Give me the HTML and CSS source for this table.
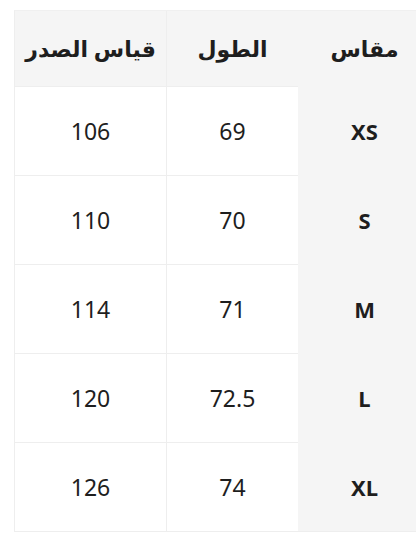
FILE: index.html
```html
<!DOCTYPE html>
<html lang="ar">
<head>
<meta charset="utf-8">
<link rel="stylesheet" href="styles.css">
</head>
<body>
<div class="page">
  <div class="table" dir="rtl">
    <div class="cell head size">مقاس</div>
    <div class="cell head">الطول</div>
    <div class="cell head">قياس الصدر</div>

    <div class="cell size">XS</div>
    <div class="cell">69</div>
    <div class="cell">106</div>

    <div class="cell size">S</div>
    <div class="cell">70</div>
    <div class="cell">110</div>

    <div class="cell size">M</div>
    <div class="cell">71</div>
    <div class="cell">114</div>

    <div class="cell size">L</div>
    <div class="cell">72.5</div>
    <div class="cell">120</div>

    <div class="cell size">XL</div>
    <div class="cell">74</div>
    <div class="cell">126</div>
  </div>
</div>
</body>
</html>
```
FILE: styles.css
```css
html, body {
  margin: 0;
  padding: 0;
  background: #ffffff;
  overflow: hidden;
}
.page {
  width: 416px;
  height: 537px;
  padding: 10px 0 0 14px;
  box-sizing: border-box;
  overflow: hidden;
}
.table {
  display: grid;
  grid-template-columns: 133px 132px 151px;
  grid-template-rows: 75px repeat(5, 89px);
  width: 416px;
  border-top: 1px solid #f0f0f0;
  border-left: 1px solid #eeeeee;
  border-bottom: 1px solid #eeeeee;
  font-family: "Noto Sans", "DejaVu Sans", sans-serif;
  color: #1e1e1e;
}
.cell {
  display: flex;
  align-items: center;
  justify-content: center;
  font-size: 23px;
  border-top: 1px solid #eeeeee;
  border-left: 1px solid #eeeeee;
  background: #ffffff;
}
.cell:nth-child(3n) {
  border-left: none;
}
.head {
  background: #f5f5f5;
  font-weight: 700;
  font-size: 22px;
  border-top: none;
  padding-bottom: 2px;
}
.size {
  background: #f5f5f5;
  font-weight: 700;
  font-size: 22px;
  border-top: none;
  border-left: none;
}
```
